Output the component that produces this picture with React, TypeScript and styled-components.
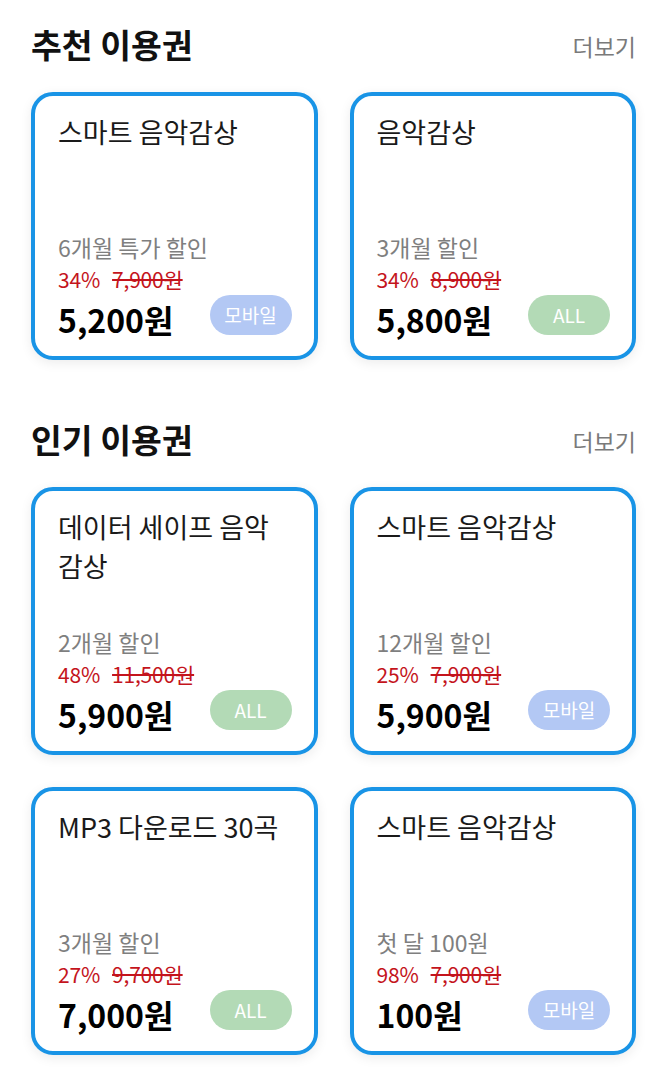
import React from 'react';
import styled, { createGlobalStyle } from 'styled-components';

type Pass = {
  title: string;
  period: string;
  rate: string;
  original: string;
  price: string;
  device: 'mobile' | 'all';
};

const recommended: Pass[] = [
  { title: '스마트 음악감상', period: '6개월 특가 할인', rate: '34%', original: '7,900원', price: '5,200원', device: 'mobile' },
  { title: '음악감상', period: '3개월 할인', rate: '34%', original: '8,900원', price: '5,800원', device: 'all' },
];

const popular: Pass[] = [
  { title: '데이터 세이프 음악감상', period: '2개월 할인', rate: '48%', original: '11,500원', price: '5,900원', device: 'all' },
  { title: '스마트 음악감상', period: '12개월 할인', rate: '25%', original: '7,900원', price: '5,900원', device: 'mobile' },
  { title: 'MP3 다운로드 30곡', period: '3개월 할인', rate: '27%', original: '9,700원', price: '7,000원', device: 'all' },
  { title: '스마트 음악감상', period: '첫 달 100원', rate: '98%', original: '7,900원', price: '100원', device: 'mobile' },
];

const GlobalStyle = createGlobalStyle`
  body {
    margin: 0;
    background: #ffffff;
    font-family: "Noto Sans CJK KR", "Noto Sans", sans-serif;
  }
`;

const Page = styled.div`
  padding: 18px 29px 30px 31px;
  display: flex;
  flex-direction: column;
  gap: 53px;
`;

const Section = styled.section`
  display: flex;
  flex-direction: column;
  gap: 24px;
`;

const Header = styled.div`
  display: flex;
  align-items: center;
  justify-content: space-between;
  height: 50px;
`;

const Title = styled.h2`
  margin: 0;
  font-size: 33.5px;
  font-weight: 700;
  color: #111;
`;

const More = styled.span`
  font-size: 23px;
  color: #7a7a7a;
  padding-top: 6px;
`;

const Grid = styled.div`
  display: grid;
  grid-template-columns: 1fr 1fr;
  gap: 32px;
`;

const Card = styled.div`
  height: 268px;
  box-sizing: border-box;
  border: 4px solid #1994e6;
  border-radius: 22px;
  background: #fff;
  box-shadow: 0 3px 12px rgba(0, 0, 0, 0.08);
  padding: 16px 22px 14px 23px;
  display: flex;
  flex-direction: column;
  justify-content: space-between;
`;

const Name = styled.div`
  font-size: 27px;
  line-height: 39px;
  color: #1a1a1a;
  padding-right: 4px;
`;

const Bottom = styled.div`
  display: flex;
  flex-direction: column;
`;

const Period = styled.div`
  font-size: 23px;
  line-height: 34px;
  color: #7f7f7f;
`;

const Discount = styled.div`
  display: flex;
  gap: 12px;
  font-size: 21px;
  line-height: 31px;
  color: #c4141c;
  letter-spacing: -0.2px;
`;

const Original = styled.span`
  text-decoration: line-through;
  text-decoration-thickness: 2px;
`;

const PriceRow = styled.div`
  display: flex;
  align-items: center;
  justify-content: space-between;
  height: 47px;
`;

const Price = styled.span`
  font-size: 32px;
  font-weight: 700;
  color: #000;
`;

const Badge = styled.span<{ $device: 'mobile' | 'all' }>`
  width: 82px;
  height: 40px;
  border-radius: 20px;
  display: flex;
  align-items: center;
  justify-content: center;
  background: ${({ $device }) => ($device === 'mobile' ? '#b3c8f4' : '#b3dab6')};
  color: #fff;
  font-size: 19px;
  margin-top: -8px;
`;

const PassCard = ({ pass }: { pass: Pass }) => (
  <Card>
    <Name>{pass.title}</Name>
    <Bottom>
      <Period>{pass.period}</Period>
      <Discount>
        <span>{pass.rate}</span>
        <Original>{pass.original}</Original>
      </Discount>
      <PriceRow>
        <Price>{pass.price}</Price>
        <Badge $device={pass.device}>{pass.device === 'mobile' ? '모바일' : 'ALL'}</Badge>
      </PriceRow>
    </Bottom>
  </Card>
);

const PassSection = ({ title, items }: { title: string; items: Pass[] }) => (
  <Section>
    <Header>
      <Title>{title}</Title>
      <More>더보기</More>
    </Header>
    <Grid>
      {items.map((p, i) => (
        <PassCard key={i} pass={p} />
      ))}
    </Grid>
  </Section>
);

const App = () => (
  <>
    <GlobalStyle />
    <Page>
      <PassSection title="추천 이용권" items={recommended} />
      <PassSection title="인기 이용권" items={popular} />
    </Page>
  </>
);

export default App;
